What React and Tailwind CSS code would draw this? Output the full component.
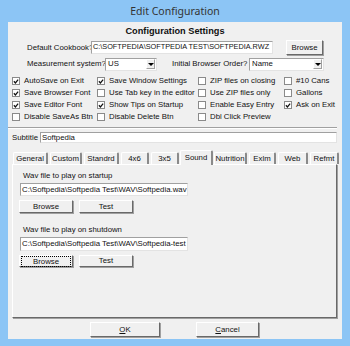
import React from 'react';

const checkCols = [
  { w: 'w-[85px]', items: [['AutoSave on Exit', true], ['Save Browser Font', true], ['Save Editor Font', true], ['Disable SaveAs Btn', false]] },
  { w: 'w-[101px]', items: [['Save Window Settings', true], ['Use Tab key in the editor', false], ['Show Tips on Startup', true], ['Disable Delete Btn', false]] },
  { w: 'w-[86px]', items: [['ZIP files on closing', false], ['Use ZIP files only', false], ['Enable Easy Entry', false], ['Dbl Click Preview', false]] },
  { w: 'w-[52px]', items: [['#10 Cans', false], ['Gallons', false], ['Ask on Exit', true]] },
];

const tabs = [
  { name: 'General', w: 'w-[35px]' },
  { name: 'Custom', w: 'w-[32px]' },
  { name: 'Standrd', w: 'w-[35px]' },
  { name: '4x6', w: 'w-[28px]' },
  { name: '3x5', w: 'w-[28px]' },
  { name: 'Sound', w: 'w-[33px]', active: true },
  { name: 'Nutrition', w: 'w-[33px]' },
  { name: 'Exlm', w: 'w-[27px]' },
  { name: 'Web', w: 'w-[30px]' },
  { name: 'Refmt', w: 'w-[29px]' },
];

// classic 3d raised button
const Btn = ({ children, className = '', focus = false }) => (
  <div className={`flex items-center justify-center bg-[#f0f0f0] border border-t-white border-l-white border-r-[#696969] border-b-[#696969] shadow-[1px_1px_0_#a0a0a0] ${className}`}>
    <span className={focus ? 'px-[11px] outline outline-1 outline-dotted outline-black leading-[9px]' : ''}>{children}</span>
  </div>
);

const Field = ({ children, className = '' }) => (
  <div className={`bg-white border border-t-[#a0a0a0] border-l-[#a0a0a0] border-r-[#e3e3e3] border-b-[#e3e3e3] flex items-center px-[1px] overflow-hidden whitespace-nowrap ${className}`}>
    {children}
  </div>
);

const Select = ({ value, className = '' }) => (
  <div className={`bg-white border border-t-[#a0a0a0] border-l-[#a0a0a0] border-r-[#e3e3e3] border-b-[#e3e3e3] flex items-center ${className}`}>
    <span className="flex-1 pl-[2px]">{value}</span>
    <div className="w-[9px] h-[10px] mr-[1px] bg-[#f0f0f0] border border-t-white border-l-white border-r-[#a0a0a0] border-b-[#a0a0a0] flex items-center justify-center">
      <div className="w-0 h-0 border-l-[3px] border-r-[3px] border-t-[3px] border-l-transparent border-r-transparent border-t-black" />
    </div>
  </div>
);

const Check = ({ label, checked }) => (
  <div className="h-[12px] flex items-center whitespace-nowrap">
    <div className="w-[8px] h-[8px] bg-white border border-[#8a8a8a] flex items-center justify-center mr-[4px]">
      {checked && (
        <svg width="7" height="7" viewBox="0 0 7 7">
          <path d="M1 3.2 L2.8 5.2 L6 1.2" stroke="#111" strokeWidth="1.4" fill="none" />
        </svg>
      )}
    </div>
    <span>{label}</span>
  </div>
);

export default function App() {
  return (
    <div
      className="w-[350px] h-[346px] bg-[#8cc5f5] flex flex-col text-[7.8px] text-[#111]"
      style={{ fontFamily: '"Liberation Sans", Arial, sans-serif' }}
    >
      {/* Title bar */}
      <div className="h-[22px] flex items-center justify-center text-[10.5px] text-[#333] pt-[1px]" style={{ fontFamily: '"Noto Sans", sans-serif' }}>
        Edit Configuration
      </div>

      {/* Client area */}
      <div className="mx-[8px] w-[334px] h-[317px] bg-[#f0f0f0] flex flex-col">
        <div className="h-[17px] flex items-end justify-center font-bold text-[9.2px]">Configuration Settings</div>

        {/* Cookbook row */}
        <div className="flex items-center mt-[1px] h-[15px]">
          <span className="ml-[19px] w-[64px] whitespace-nowrap">Default Cookbook?</span>
          <Field className="w-[182px] h-[13px] text-[7.3px]">C:\SOFTPEDIA\SOFTPEDIA TEST\SOFTPEDIA.RWZ</Field>
          <Btn className="ml-[13px] w-[37px] h-[15px]">Browse</Btn>
        </div>

        {/* Measurement row */}
        <div className="flex items-center mt-[2px] h-[14px]">
          <span className="ml-[19px] w-[78px] whitespace-nowrap">Measurement system?</span>
          <Select value="US" className="w-[52px] h-[13px]" />
          <span className="ml-[15px] w-[77px] whitespace-nowrap">Initial Browser Order?</span>
          <Select value="Name" className="w-[75px] h-[13px]" />
        </div>

        {/* Checkbox grid */}
        <div className="flex mt-[4px] ml-[4px] h-[48px]">
          {checkCols.map((col, i) => (
            <div key={i} className={`flex flex-col ${col.w}`}>
              {col.items.map(([label, checked]) => (
                <Check key={label} label={label} checked={checked} />
              ))}
            </div>
          ))}
        </div>

        {/* Separator */}
        <div className="mt-[4px] mr-[5px] h-[2px] border-t border-t-[#a0a0a0] border-b border-b-white" />

        {/* Subtitle */}
        <div className="flex items-center mt-[3px] h-[11px]">
          <span className="ml-[4px] w-[28px]">Subtitle</span>
          <Field className="w-[297px] h-[11px]">Softpedia</Field>
        </div>

        {/* Tabs */}
        <div className="flex items-end ml-[4px] mt-[7px] h-[14px]">
          {tabs.map((t) => (
            <div
              key={t.name}
              className={`${t.w} flex items-center justify-center border-t border-l border-t-white border-l-white border-r-2 border-r-[#8a8a8a] rounded-tl-[2px] rounded-tr-[2px] ${
                t.active ? 'h-[15px] mb-[-1px] bg-[#f0f0f0] z-10' : 'h-[12px] mx-[1px]'
              }`}
            >
              {t.name}
            </div>
          ))}
        </div>

        {/* Tab panel */}
        <div className="ml-[4px] w-[325px] h-[154px] border border-t-white border-l-white border-r-[#696969] border-b-[#696969] shadow-[1px_1px_0_#a0a0a0] flex flex-col pl-[7px]">
          <span className="mt-[5px] ml-[3px] h-[10px]">Wav file to play on startup</span>
          <Field className="mt-[3px] w-[168px] h-[13px]">C:\Softpedia\Softpedia Test\WAV\Softpedia.wav</Field>
          <div className="flex mt-[4px] -ml-[1px] gap-[6px]">
            <Btn className="w-[54px] h-[13px]">Browse</Btn>
            <Btn className="w-[54px] h-[13px]">Test</Btn>
          </div>
          <span className="mt-[11px] ml-[3px] h-[10px]">Wav file to play on shutdown</span>
          <Field className="mt-[3px] w-[168px] h-[14px]">C:\Softpedia\Softpedia Test\WAV\Softpedia-test</Field>
          <div className="flex mt-[4px] -ml-[1px] gap-[6px]">
            <Btn className="w-[54px] h-[12px]" focus>Browse</Btn>
            <Btn className="w-[54px] h-[12px]">Test</Btn>
          </div>
        </div>

        {/* OK / Cancel */}
        <div className="flex mt-[4px] ml-[82px] gap-[36px]">
          <Btn className="w-[70px] h-[15px]"><span className="underline">O</span>K</Btn>
          <Btn className="w-[63px] h-[15px]"><span className="underline">C</span>ancel</Btn>
        </div>
      </div>
    </div>
  );
}
